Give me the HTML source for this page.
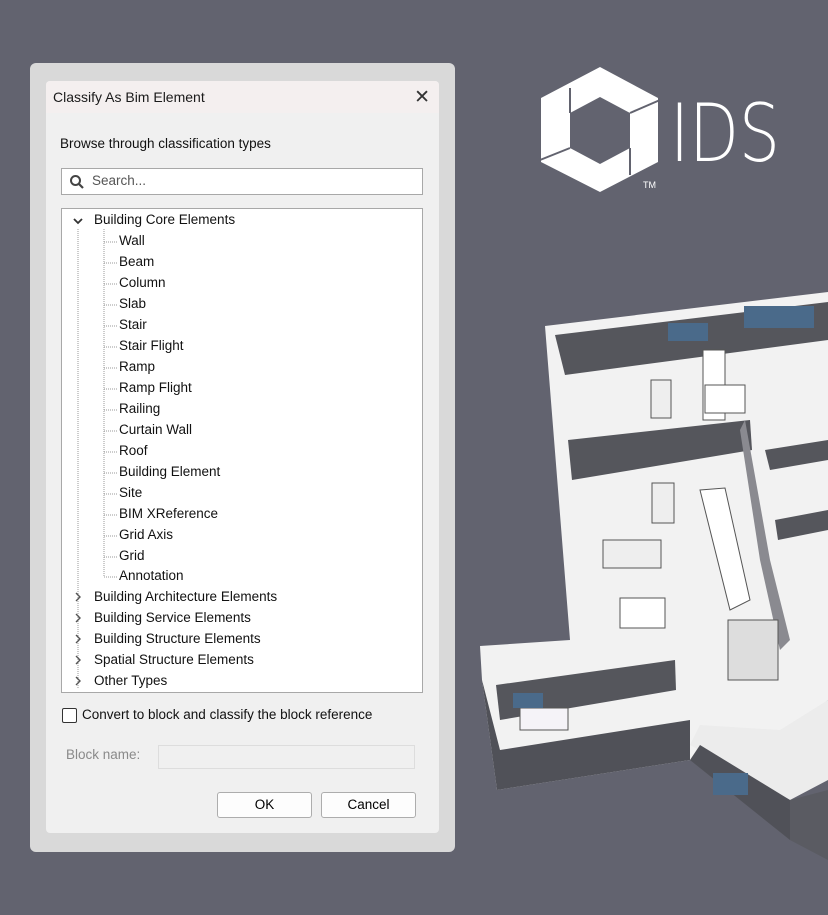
<!DOCTYPE html>
<html><head><meta charset="utf-8"><style>
*{margin:0;padding:0;box-sizing:border-box}
body{width:828px;height:915px;background:#62636f;font-family:"Segoe UI","Liberation Sans",sans-serif;position:relative;overflow:hidden}
.outer{position:absolute;left:30px;top:63px;width:425px;height:789px;background:#d9d9d9;border-radius:6px}
.dlg{position:absolute;left:46px;top:81px;width:393px;height:752px;background:#f0f0f0;border-radius:4px;overflow:hidden}
.title{height:32px;background:#f4efef;font-size:14px;color:#1a1a1a;padding:8px 0 0 7px}
.x{position:absolute;right:9px;top:5px;font-size:19px;color:#333}
.t{position:absolute;font-size:13.5px;color:#111}
.search{position:absolute;left:15px;top:87px;width:362px;height:27px;background:#fff;border:1px solid #a8a8a8}
.tree{position:absolute;left:15px;top:127px;width:362px;height:485px;background:#fff;border:1px solid #a8a8a8}
.ti{position:absolute;font-size:13.5px;color:#111;white-space:nowrap}
.btn{position:absolute;top:711px;width:95px;height:26px;border:1px solid #adadad;background:#fdfdfd;font-size:13.5px;text-align:center;line-height:24px;border-radius:3px}
</style></head><body>
<svg width="828" height="915" style="position:absolute;left:0;top:0">
 <path fill="#fff" fill-rule="evenodd" d="M600 67L658 98L658 162L600 192L541 162L541 98Z M600 97L630 113L630 148L600 164L570 148L570 113Z"/>
 <g stroke="#62636f" stroke-width="2">
  <line x1="570" y1="113" x2="570" y2="88"/>
  <line x1="630" y1="113" x2="660" y2="100"/>
  <line x1="630" y1="148" x2="630" y2="175"/>
  <line x1="570" y1="148" x2="540" y2="160"/>
 </g>
 <text x="670" y="161" font-family="DejaVu Sans" font-weight="200" font-size="80" fill="#fff" textLength="110" lengthAdjust="spacingAndGlyphs">IDS</text>
 <text x="643" y="188" font-family="Liberation Sans" font-size="9" fill="#fff">TM</text>
 <polygon points="545,326 828,292 828,700 790,730 690,760 497,790 482,680 480,646 570,640" fill="#f2f2f2"/>
 <polygon points="555,335 828,302 828,340 565,375" fill="#55565c"/>
 <polygon points="568,440 750,420 752,450 572,480" fill="#55565c"/>
 <polygon points="496,685 675,660 676,690 500,720" fill="#55565c"/>
 <polygon points="482,680 497,790 690,760 690,720 500,750" fill="#505158"/>
 <polygon points="690,745 790,800 828,780 828,700 780,730 700,725" fill="#ececec"/>
 <polygon points="690,760 790,840 790,800 700,745" fill="#505158"/>
 <polygon points="790,800 828,790 828,860 790,840" fill="#5a5b62"/>
 <polygon points="745,420 770,560 780,600 790,640 780,650 760,560 740,430" fill="#8a8a90"/>
 <polygon points="765,450 828,440 828,460 770,470" fill="#55565c"/>
 <polygon points="775,520 828,510 828,530 778,540" fill="#55565c"/>
 <rect x="703" y="350" width="22" height="70" fill="#fff" stroke="#555"/>
 <rect x="651" y="380" width="20" height="38" fill="#eee" stroke="#555"/>
 <rect x="705" y="385" width="40" height="28" fill="#fff" stroke="#555"/>
 <rect x="652" y="483" width="22" height="40" fill="#eee" stroke="#555"/>
 <polygon points="700,490 725,488 750,600 730,610" fill="#fff" stroke="#555"/>
 <rect x="603" y="540" width="58" height="28" fill="#eee" stroke="#555"/>
 <rect x="620" y="598" width="45" height="30" fill="#fff" stroke="#555"/>
 <rect x="728" y="620" width="50" height="60" fill="#ddd" stroke="#555"/>
 <rect x="520" y="708" width="48" height="22" fill="#f5f3f8" stroke="#555"/>
 <rect x="513" y="693" width="30" height="15" fill="#4a6a8a"/>
 <rect x="668" y="323" width="40" height="18" fill="#4a6a8a"/>
 <rect x="744" y="306" width="70" height="22" fill="#4a6a8a"/>
 <rect x="713" y="773" width="35" height="22" fill="#4a6a8a"/>
</svg>
<div class="outer"></div>
<div class="dlg">
 <div class="title">Classify As Bim Element</div>
 <div class="x">✕</div>
 <div class="t" style="left:14px;top:55px">Browse through classification types</div>
 <div class="search">
  <svg width="16" height="16" style="position:absolute;left:7px;top:5px"><circle cx="6.5" cy="6.5" r="4.5" fill="none" stroke="#444" stroke-width="2"/><line x1="10" y1="10" x2="14" y2="14" stroke="#444" stroke-width="2.2"/></svg>
  <div class="ti" style="left:30px;top:4px;color:#555">Search...</div>
 </div>
 <div class="tree">
  <svg width="60" height="485" style="position:absolute;left:0;top:0">
   <path d="M12 10l4 4l4-4" fill="none" stroke="#333" stroke-width="1.8"/>
   <line x1="16" y1="20" x2="16" y2="480" stroke="#999" stroke-dasharray="1,1"/>
   <line x1="42" y1="20" x2="42" y2="368" stroke="#999" stroke-dasharray="1,1"/>
   <g stroke="#999" stroke-dasharray="1,1">
   <line x1="42" y1="33" x2="56" y2="33"/><line x1="42" y1="54" x2="56" y2="54"/><line x1="42" y1="75" x2="56" y2="75"/><line x1="42" y1="96" x2="56" y2="96"/><line x1="42" y1="117" x2="56" y2="117"/><line x1="42" y1="138" x2="56" y2="138"/><line x1="42" y1="159" x2="56" y2="159"/><line x1="42" y1="180" x2="56" y2="180"/><line x1="42" y1="201" x2="56" y2="201"/><line x1="42" y1="222" x2="56" y2="222"/><line x1="42" y1="243" x2="56" y2="243"/><line x1="42" y1="264" x2="56" y2="264"/><line x1="42" y1="285" x2="56" y2="285"/><line x1="42" y1="306" x2="56" y2="306"/><line x1="42" y1="327" x2="56" y2="327"/><line x1="42" y1="348" x2="56" y2="348"/><line x1="42" y1="368" x2="56" y2="368"/>
   </g>
   <g fill="none" stroke="#555" stroke-width="1.4">
   <path d="M14 384l4 4l-4 4"/><path d="M14 405l4 4l-4 4"/><path d="M14 426l4 4l-4 4"/><path d="M14 447l4 4l-4 4"/><path d="M14 468l4 4l-4 4"/>
   </g>
  </svg>
  <div class="ti" style="left:32px;top:3px">Building Core Elements</div>
  <div class="ti" style="left:57px;top:24px">Wall</div>
  <div class="ti" style="left:57px;top:45px">Beam</div>
  <div class="ti" style="left:57px;top:66px">Column</div>
  <div class="ti" style="left:57px;top:87px">Slab</div>
  <div class="ti" style="left:57px;top:108px">Stair</div>
  <div class="ti" style="left:57px;top:129px">Stair Flight</div>
  <div class="ti" style="left:57px;top:150px">Ramp</div>
  <div class="ti" style="left:57px;top:171px">Ramp Flight</div>
  <div class="ti" style="left:57px;top:192px">Railing</div>
  <div class="ti" style="left:57px;top:213px">Curtain Wall</div>
  <div class="ti" style="left:57px;top:234px">Roof</div>
  <div class="ti" style="left:57px;top:255px">Building Element</div>
  <div class="ti" style="left:57px;top:276px">Site</div>
  <div class="ti" style="left:57px;top:297px">BIM XReference</div>
  <div class="ti" style="left:57px;top:318px">Grid Axis</div>
  <div class="ti" style="left:57px;top:339px">Grid</div>
  <div class="ti" style="left:57px;top:359px">Annotation</div>
  <div class="ti" style="left:32px;top:380px">Building Architecture Elements</div>
  <div class="ti" style="left:32px;top:401px">Building Service Elements</div>
  <div class="ti" style="left:32px;top:422px">Building Structure Elements</div>
  <div class="ti" style="left:32px;top:443px">Spatial Structure Elements</div>
  <div class="ti" style="left:32px;top:464px">Other Types</div>
 </div>
 <div style="position:absolute;left:16px;top:627px;width:15px;height:15px;border:1px solid #333;background:#fff;border-radius:2px"></div>
 <div class="t" style="left:36px;top:626px">Convert to block and classify the block reference</div>
 <div class="t" style="left:20px;top:666px;color:#8a8a8a">Block name:</div>
 <div style="position:absolute;left:112px;top:664px;width:257px;height:24px;border:1px solid #ddd;background:#f0f0f0"></div>
 <div class="btn" style="left:171px">OK</div>
 <div class="btn" style="left:275px">Cancel</div>
</div>
</body></html>
